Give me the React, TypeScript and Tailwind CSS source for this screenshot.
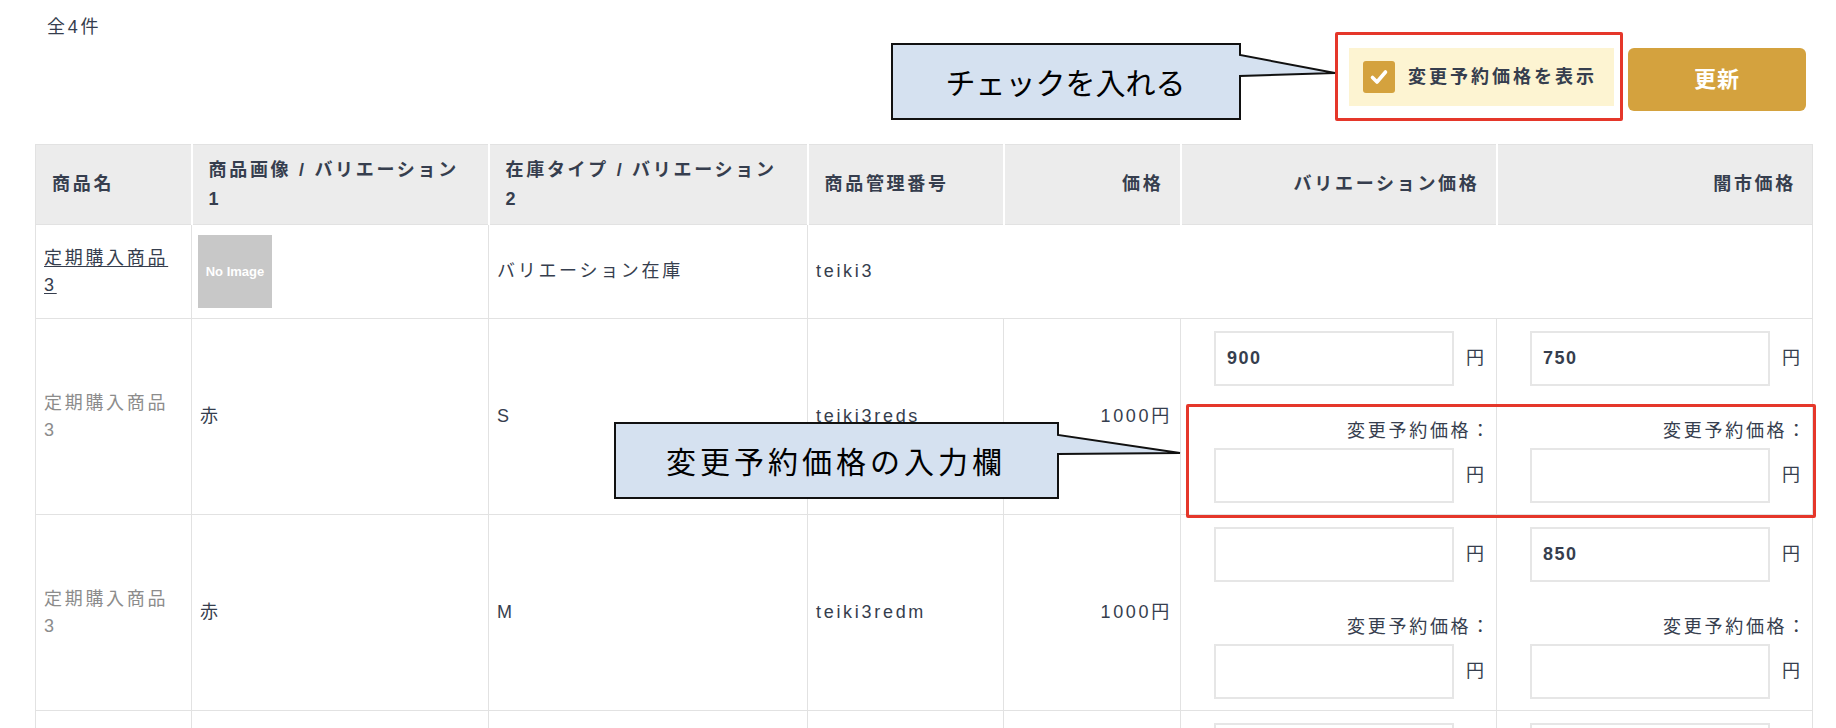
import React from "react";

type Variation = {
    name: string;
    color: string;
    size: string;
    code: string;
    price: string;
    varPrice: string;
    blackPrice: string;
};

const rows: Variation[] = [
    { name: "定期購入商品", color: "赤", size: "S", code: "teiki3reds", price: "1000円", varPrice: "900", blackPrice: "750" },
    { name: "定期購入商品", color: "赤", size: "M", code: "teiki3redm", price: "1000円", varPrice: "", blackPrice: "850" },
    { name: "定期購入商品", color: "赤", size: "L", code: "teiki3redl", price: "1000円", varPrice: "", blackPrice: "" },
];

function YenInput({ value }: { value: string }) {
    return (
        <div className="flex items-center justify-end gap-3">
            <input
                type="text"
                defaultValue={value}
                className="h-[55px] w-[240px] border-2 border-[#e6e6e6] bg-white px-[11px] font-bold tracking-[0.08em] outline-none"
            />
            <span className="tracking-normal">円</span>
        </div>
    );
}

function PriceCell({ value }: { value: string }) {
    return (
        <td className="border border-[#e2e2e2] px-3 pt-3 pb-[11px] align-top">
            <YenInput value={value} />
            <div className="mt-[33px] mb-[5px] mr-[-8px] text-right leading-[24px]">変更予約価格：</div>
            <YenInput value="" />
        </td>
    );
}

function Callout1() {
    return (
        <div className="absolute left-[891px] top-[43px] h-[77px] w-[446px]">
            <svg width="446" height="77" className="absolute inset-0 overflow-visible">
                <path d="M1 1 H349 V12 L444 30 L349 33 V76 H1 Z" fill="#d5e1f0" stroke="#111" strokeWidth="2" />
            </svg>
            <div className="absolute left-0 top-0 flex h-[77px] w-[349px] items-center justify-center font-['Noto_Sans_CJK_JP',sans-serif] text-[30px] tracking-normal text-black">
                チェックを入れる
            </div>
        </div>
    );
}

function Callout2() {
    return (
        <div className="absolute left-[614px] top-[422px] h-[77px] w-[568px]">
            <svg width="568" height="77" className="absolute inset-0 overflow-visible">
                <path d="M1 1 H444 V13 L566 31 L444 32 V76 H1 Z" fill="#d5e1f0" stroke="#111" strokeWidth="2" />
            </svg>
            <div className="absolute left-0 top-0 flex h-[77px] w-[444px] items-center justify-center font-['Noto_Sans_CJK_JP',sans-serif] text-[30px] tracking-[4px] text-black">
                変更予約価格の入力欄
            </div>
        </div>
    );
}

export default function App() {
    return (
        <div className="relative h-[728px] w-[1836px] overflow-hidden bg-white font-['Liberation_Sans','Noto_Sans_CJK_JP',sans-serif] text-[18px] tracking-[0.15em] text-[#363e4e]">
            <div className="pl-[35px]">
                <div className="flex h-[144px] w-[1777px] items-start justify-between">
                    <p className="ml-3 mt-[14px] leading-[26px]">全4件</p>
                    <div className="mr-[6px] mt-[48px] flex items-start gap-[14px]">
                        <label className="flex h-[58px] w-[265px] items-center gap-[13px] bg-[#fdf4d2] pl-[14px]">
                            <span className="flex h-[32px] w-[32px] items-center justify-center rounded-[3px] bg-[#d4a23e]">
                                <svg width="22" height="22" viewBox="0 0 22 22">
                                    <path d="M4.5 11.5 L9 16 L17.5 6" fill="none" stroke="#fff" strokeWidth="3.6" strokeLinecap="round" strokeLinejoin="round" />
                                </svg>
                            </span>
                            <span className="text-[18px] font-bold tracking-[3px]">変更予約価格を表示</span>
                        </label>
                        <button className="h-[63px] w-[178px] rounded-[6px] bg-[#d4a23e] text-[22px] font-bold tracking-[1px] text-white">
                            更新
                        </button>
                    </div>
                </div>

                <table className="w-[1777px] table-fixed border-collapse border border-[#e2e2e2]">
                    <colgroup>
                        <col className="w-[156px]" />
                        <col className="w-[297px]" />
                        <col className="w-[319px]" />
                        <col className="w-[196px]" />
                        <col className="w-[177px]" />
                        <col className="w-[316px]" />
                        <col className="w-[316px]" />
                    </colgroup>
                    <thead>
                        <tr className="h-[80px] bg-[#ececec] text-left font-bold leading-[29px]">
                            <th className="border-r-2 border-white px-4 align-middle">商品名</th>
                            <th className="border-r-2 border-white px-4 align-middle">商品画像 / バリエーション<br />1</th>
                            <th className="border-r-2 border-white px-4 align-middle">在庫タイプ / バリエーション<br />2</th>
                            <th className="border-r-2 border-white px-4 align-middle">商品管理番号</th>
                            <th className="border-r-2 border-white px-4 text-right align-middle">価格</th>
                            <th className="border-r-2 border-white px-4 text-right align-middle">バリエーション価格</th>
                            <th className="px-4 text-right align-middle">闇市価格</th>
                        </tr>
                    </thead>
                    <tbody className="leading-[27px]">
                        <tr className="h-[94px]">
                            <td className="border border-[#e2e2e2] px-2 align-middle">
                                <a href="#" className="underline underline-offset-2">定期購入商品<br />3</a>
                            </td>
                            <td className="border border-[#e2e2e2] px-[6px] align-middle">
                                <div className="flex h-[73px] w-[74px] items-center justify-center bg-[#c8c8c8] text-[13px] font-bold tracking-normal text-white">
                                    No Image
                                </div>
                            </td>
                            <td className="border border-[#e2e2e2] px-2 align-middle">バリエーション在庫</td>
                            <td colSpan={4} className="border border-[#e2e2e2] px-2 align-middle">teiki3</td>
                        </tr>
                        {rows.map((r) => (
                            <tr key={r.code}>
                                <td className="border border-[#e2e2e2] px-2 align-middle text-[#8c8c8c]">{r.name}<br />3</td>
                                <td className="border border-[#e2e2e2] px-2 align-middle">{r.color}</td>
                                <td className="border border-[#e2e2e2] px-2 align-middle">{r.size}</td>
                                <td className="border border-[#e2e2e2] px-2 align-middle">{r.code}</td>
                                <td className="border border-[#e2e2e2] pr-[8px] text-right align-middle">{r.price}</td>
                                <PriceCell value={r.varPrice} />
                                <PriceCell value={r.blackPrice} />
                            </tr>
                        ))}
                    </tbody>
                </table>
            </div>

            <div className="absolute left-[1335px] top-[32px] h-[89px] w-[288px] rounded-[2px] border-[3px] border-[#e5372a]" />
            <div className="absolute left-[1186px] top-[404px] h-[114px] w-[630px] rounded-[2px] border-[3px] border-[#e5372a]" />
            <Callout1 />
            <Callout2 />
        </div>
    );
}
